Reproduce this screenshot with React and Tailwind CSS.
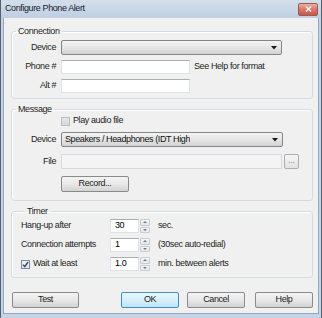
import React from "react";

const inputCls =
  "h-[14px] bg-white border border-[#dde2e8] border-t-[#abadb3] px-[2px] flex items-center";

const btnCls =
  "h-[16px] flex items-center justify-center rounded-[2px] border border-[#8a8a8a] bg-gradient-to-b from-[#f4f4f4] via-[#e8e8e8] to-[#d3d3d3] text-[#1b1b1b]";

const Arrow = () => (
  <svg width="6" height="4" viewBox="0 0 6 4" className="shrink-0">
    <path d="M0 0 H6 L3 3.5 Z" fill="#1a1a1a" />
  </svg>
);

const Combo = ({ text, width }) => (
  <div
    className={`${width} h-[15px] flex items-center justify-between pl-[3px] pr-[4px] rounded-[2px] border border-[#858585] bg-gradient-to-b from-[#f3f3f3] via-[#e6e6e6] to-[#d2d2d2]`}
  >
    <span className="text-[#111] truncate">{text}</span>
    <Arrow />
  </div>
);

const Spinner = ({ value }) => (
  <div className="flex h-[14px]">
    <div className={`${inputCls} w-[29px] pl-[4px]`}>{value}</div>
    <div className="w-[10px] flex flex-col gap-[1px] ml-[1px]">
      <div className="flex-1 flex items-center justify-center rounded-[1px] border border-[#c9ccd1] bg-gradient-to-b from-[#f5f6f7] to-[#e3e6ea]">
        <svg width="4" height="2" viewBox="0 0 4 2">
          <path d="M0 2 L2 0 L4 2 Z" fill="#6d7a8a" />
        </svg>
      </div>
      <div className="flex-1 flex items-center justify-center rounded-[1px] border border-[#c9ccd1] bg-gradient-to-b from-[#f5f6f7] to-[#e3e6ea]">
        <svg width="4" height="2" viewBox="0 0 4 2">
          <path d="M0 0 L4 0 L2 2 Z" fill="#6d7a8a" />
        </svg>
      </div>
    </div>
  </div>
);

const Group = ({ title, className, children }) => (
  <fieldset
    className={`ml-[7px] w-[302px] border border-[#d5dbe0] rounded-[3px] shadow-[inset_1px_1px_0_#ffffff] ${className}`}
  >
    <legend className="ml-[4px] px-[2px] leading-[12px] text-[#1e1e1e]">{title}</legend>
    {children}
  </fieldset>
);

const Row = ({ label, children, className = "" }) => (
  <div className={`flex items-center ${className}`}>
    <span className="w-[45px] text-right pr-[1px] text-[#1e1e1e]">{label}</span>
    <div className="ml-[4px] flex items-center">{children}</div>
  </div>
);

export default function App() {
  return (
    <div className="w-[322px] h-[318px] flex flex-col bg-[#c4d4e6] border-x border-[#56606c] font-['Liberation_Sans',Arial,sans-serif] text-[9px] tracking-[-0.4px]">
      <div className="h-[18px] shrink-0 flex items-center justify-between pl-[4px] pr-[3px] bg-gradient-to-b from-[#d3deeb] to-[#bfcfe2]">
        <span className="text-[#17202b]">Configure Phone Alert</span>
        <div className="w-[20px] h-[13px] flex items-center justify-center rounded-[2px] border border-[#9a5a50] bg-gradient-to-b from-[#eab0a4] via-[#d8766a] to-[#c9584a]">
          <svg width="7" height="6" viewBox="0 0 7 6">
            <path d="M1 0.5 L6 5.5 M6 0.5 L1 5.5" stroke="#f6eeee" strokeWidth="1.5" />
          </svg>
        </div>
      </div>

      <div className="flex-1 mx-[2px] mb-[4px] bg-[#f0f0f0] border-x border-b border-[#8fa7c0] flex flex-col">
        <Group title="Connection" className="mt-[7px] pt-[3px] pb-[5px]">
          <Row label="Device">
            <Combo width="w-[221px]" text="" />
          </Row>
          <Row label="Phone #" className="mt-[5px]">
            <div className={`${inputCls} w-[129px]`} />
            <span className="ml-[4px] text-[#1e1e1e]">See Help for format</span>
          </Row>
          <Row label="Alt #" className="mt-[5px]">
            <div className={`${inputCls} w-[129px]`} />
          </Row>
        </Group>

        <Group title="Message" className="mt-[4px] pt-[1px] pb-[8px]">
          <Row label="" className="h-[10px]">
            <div className="w-[9px] h-[9px] border border-[#b7bcc3] bg-gradient-to-b from-[#e6e8ea] to-[#d4d7db]" />
            <span className="ml-[3px] text-[#1e1e1e]">Play audio file</span>
          </Row>
          <Row label="Device" className="mt-[6px]">
            <Combo width="w-[222px]" text="Speakers / Headphones (IDT High" />
          </Row>
          <Row label="File" className="mt-[7px]">
            <div className="w-[221px] h-[15px] border border-[#d6d9dd] bg-[#f4f4f4]" />
            <div className="ml-[2px] w-[15px] h-[15px] flex items-end justify-center pb-[3px] rounded-[2px] border border-[#a9adb2] bg-gradient-to-b from-[#f6f6f6] to-[#e2e2e2] text-[#8a8a8a] leading-none">
              ...
            </div>
          </Row>
          <Row label="" className="mt-[7px]">
            <div className={`${btnCls} w-[68px]`}>Record...</div>
          </Row>
        </Group>

        <Group title="Timer" className="mt-[4px] pt-[2px] pb-[6px] pl-[9px]">
          <div className="flex items-center">
            <span className="w-[89px] text-[#1e1e1e]">Hang-up after</span>
            <Spinner value="30" />
            <span className="ml-[8px] text-[#1e1e1e]">sec.</span>
          </div>
          <div className="flex items-center mt-[5px]">
            <span className="w-[89px] text-[#1e1e1e]">Connection attempts</span>
            <Spinner value="1" />
            <span className="ml-[8px] text-[#1e1e1e]">(30sec auto-redial)</span>
          </div>
          <div className="flex items-center mt-[5px]">
            <div className="w-[89px] flex items-center">
              <div className="w-[9px] h-[9px] flex items-center justify-center border border-[#7f8a98] bg-gradient-to-b from-[#f2f4f6] to-[#dfe3e8]">
                <svg width="7" height="7" viewBox="0 0 7 7">
                  <path d="M1 3.6 L2.8 5.6 L6 1" fill="none" stroke="#2a4d7c" strokeWidth="1.4" />
                </svg>
              </div>
              <span className="ml-[3px] text-[#1e1e1e]">Wait at least</span>
            </div>
            <Spinner value="1.0" />
            <span className="ml-[8px] text-[#1e1e1e]">min. between alerts</span>
          </div>
        </Group>

        <div className="mt-[14px] flex items-center pl-[8px]">
          <div className={`${btnCls} w-[67px]`}>Test</div>
          <div className="ml-[42px] w-[58px] h-[16px] flex items-center justify-center rounded-[2px] border border-[#3c8fc4] bg-gradient-to-b from-[#eaf6fd] via-[#d7effc] to-[#bfe4f8] text-[#1b1b1b]">
            OK
          </div>
          <div className={`${btnCls} ml-[8px] w-[58px]`}>Cancel</div>
          <div className={`${btnCls} ml-[10px] w-[58px]`}>Help</div>
        </div>
      </div>
    </div>
  );
}
